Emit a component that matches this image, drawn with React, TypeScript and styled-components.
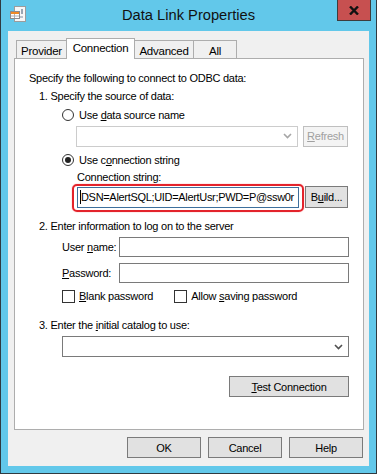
import React from "react"
import styled, { createGlobalStyle } from "styled-components"

const GlobalStyle = createGlobalStyle`
  html, body {
    margin: 0;
    padding: 0;
    background: #ffffff;
  }
  body {
    font-family: "Liberation Sans", Arial, sans-serif;
    font-size: 11px;
    letter-spacing: -0.25px;
    color: #000;
  }
  * {
    box-sizing: border-box;
  }
`

const Window = styled.div`
  width: 377px;
  height: 474px;
  background: #62c8ea;
  border: 1px solid #2f3a40;
  border-top: none;
  display: flex;
  flex-direction: column;
`

const TitleBar = styled.div`
  height: 31px;
  flex-shrink: 0;
  display: grid;
  grid-template-columns: 1fr auto 1fr;
  align-items: start;
`

const AppIcon = styled.div`
  margin: 5px 0 0 9px;
  width: 17px;
  height: 17px;

  svg {
    display: block;
  }
`

const Title = styled.div`
  margin-top: 6px;
  font-size: 14.7px;
  letter-spacing: 0;
  line-height: 18px;
  color: #111;
`

const CloseButton = styled.div`
  justify-self: end;
  margin-right: 5px;
  width: 34px;
  height: 21px;
  background: #c75050;
  border: 1px solid #3d3d3d;
  border-top: none;
  display: flex;
  align-items: center;
  justify-content: center;
`

const Client = styled.div`
  flex: 1;
  margin: 0 7px 7px 7px;
  background: #f0f0f0;
  padding: 7px 6px 0 6px;
  display: flex;
  flex-direction: column;
`

const TabStrip = styled.div`
  display: flex;
  align-items: flex-end;
  padding-left: 2px;
  margin-bottom: -1px;
  position: relative;
  z-index: 1;
`

const Tab = styled.div<{ $active?: boolean; $w: number }>`
  width: ${(p) => p.$w}px;
  height: ${(p) => (p.$active ? 21 : 19)}px;
  margin-left: -1px;
  border: 1px solid #adadad;
  border-bottom: ${(p) => (p.$active ? "none" : "1px solid #adadad")};
  background: ${(p) => (p.$active ? "#ffffff" : "#f0f0f0")};
  position: relative;
  z-index: ${(p) => (p.$active ? 2 : 1)};
  display: flex;
  justify-content: center;
  padding-top: ${(p) => (p.$active ? 2 : 3)}px;
  line-height: 14px;
  font-size: 11.5px;

  &:first-child {
    margin-left: 0;
  }
`

const Panel = styled.div`
  height: 372px;
  width: 350px;
  background: #ffffff;
  border: 1px solid #adadad;
  padding: 12px 14px 0 14px;
  display: flex;
  flex-direction: column;
`

const Row = styled.div<{ $mt: number; $indent?: number; $h?: number; $end?: boolean }>`
  margin-top: ${(p) => p.$mt}px;
  padding-left: ${(p) => p.$indent ?? 0}px;
  height: ${(p) => p.$h ?? 14}px;
  line-height: 14px;
  display: flex;
  align-items: center;
  justify-content: ${(p) => (p.$end ? "flex-end" : "flex-start")};
  white-space: nowrap;
`

const Key = styled.span`
  text-decoration: underline;
  text-underline-offset: 1px;
`

const Radio = styled.span<{ $checked?: boolean }>`
  width: 12px;
  height: 12px;
  border-radius: 50%;
  border: 1px solid #333;
  background: #fff;
  margin-right: 5px;
  display: flex;
  align-items: center;
  justify-content: center;

  &::after {
    content: "";
    display: ${(p) => (p.$checked ? "block" : "none")};
    width: 6px;
    height: 6px;
    border-radius: 50%;
    background: #222;
  }
`

const Check = styled.span`
  width: 13px;
  height: 13px;
  border: 1px solid #333;
  background: #fff;
  margin-right: 4px;
`

const Combo = styled.div<{ $w?: number; $disabled?: boolean }>`
  ${(p) => (p.$w ? `width: ${p.$w}px;` : "flex: 1;")}
  height: 21px;
  background: #fff;
  border: 1px solid ${(p) => (p.$disabled ? "#cccccc" : "#7a7a7a")};
  display: flex;
  align-items: center;
  justify-content: flex-end;
  padding-right: 5px;
`

const Input = styled.div<{ $w: number; $focused?: boolean }>`
  width: ${(p) => p.$w}px;
  height: ${(p) => (p.$focused ? 21 : 20)}px;
  margin-left: auto;
  background: #fff;
  border: 1px solid ${(p) => (p.$focused ? "#3d6f9c" : "#7a7a7a")};
  display: flex;
  align-items: center;
  padding-left: 2px;
  overflow: hidden;
  white-space: nowrap;
  letter-spacing: -0.32px;
`

const FocusWrap = styled.div`
  position: relative;
  display: flex;
`

const Callout = styled.span`
  position: absolute;
  left: -5px;
  right: -5px;
  top: -3px;
  bottom: -4px;
  border: 2px solid #e3232b;
  border-radius: 5px;
  box-shadow: 0 0 1px #ff4b4b;
  pointer-events: none;
`

const Caret = styled.span`
  border-left: 1px solid #000;
  height: 14px;
  line-height: 14px;
`

const Button = styled.div<{ $w: number; $disabled?: boolean; $h?: number }>`
  width: ${(p) => p.$w}px;
  height: ${(p) => p.$h ?? 21}px;
  background: ${(p) => (p.$disabled ? "#f4f4f4" : "#e1e1e1")};
  border: 1px solid ${(p) => (p.$disabled ? "#bfbfbf" : "#7a7a7a")};
  color: ${(p) => (p.$disabled ? "#a0a0a0" : "#000")};
  display: flex;
  align-items: center;
  justify-content: center;
  line-height: 14px;
  flex-shrink: 0;
`

const Gap = styled.span<{ $w: number }>`
  width: ${(p) => p.$w}px;
  flex-shrink: 0;
`

const Footer = styled.div`
  margin-top: 7px;
  display: flex;
  justify-content: flex-end;
  gap: 7px;
`

const Chevron = ({ color }: { color: string }) => (
  <svg width="9" height="6" viewBox="0 0 9 6">
    <path d="M1 1 L4.5 4.5 L8 1" fill="none" stroke={color} strokeWidth="1.6" />
  </svg>
)

const DataLinkIcon = () => (
  <svg width="17" height="17" viewBox="0 0 17 17">
    <rect x="4.5" y="1.5" width="11" height="15" fill="#f7f7f7" stroke="#9c9c9c" />
    <rect x="11" y="4" width="2" height="5" fill="#9aa6b4" />
    <rect x="8" y="11" width="5" height="2" fill="#b9c2cc" />
    <rect x="0.5" y="6.5" width="9" height="7" fill="#ffffff" stroke="#8c8c8c" />
    <rect x="1" y="7" width="8" height="2" fill="#f08a24" />
    <line x1="1" y1="11" x2="9" y2="11" stroke="#b0b0b0" />
    <line x1="4.5" y1="9" x2="4.5" y2="13" stroke="#b0b0b0" />
  </svg>
)

const CloseGlyph = () => (
  <svg width="10" height="9" viewBox="0 0 10 9">
    <path d="M1 0.5 L9 8.5 M9 0.5 L1 8.5" stroke="#111" strokeWidth="2.4" />
  </svg>
)

export default function App() {
  return (
    <>
      <GlobalStyle />
      <Window>
        <TitleBar>
          <AppIcon>
            <DataLinkIcon />
          </AppIcon>
          <Title>Data Link Properties</Title>
          <CloseButton>
            <CloseGlyph />
          </CloseButton>
        </TitleBar>

        <Client>
          <TabStrip>
            <Tab $w={51}>Provider</Tab>
            <Tab $w={69} $active>
              Connection
            </Tab>
            <Tab $w={60}>Advanced</Tab>
            <Tab $w={44}>All</Tab>
          </TabStrip>

          <Panel>
            <Row $mt={0}>Specify the following to connect to ODBC data:</Row>
            <Row $mt={4} $indent={10}>
              1. Specify the source of data:
            </Row>
            <Row $mt={4} $indent={33} $h={15}>
              <Radio />
              <span>
                Use <Key>d</Key>ata source name
              </span>
            </Row>
            <Row $mt={3} $indent={47} $h={22}>
              <Combo $w={222} $disabled>
                <Chevron color="#a6a6a6" />
              </Combo>
              <Gap $w={5} />
              <Button $w={45} $disabled>
                <span>
                  <Key>R</Key>efresh
                </span>
              </Button>
            </Row>
            <Row $mt={6} $indent={33}>
              <Radio $checked />
              <span>
                Use c<Key>o</Key>nnection string
              </span>
            </Row>
            <Row $mt={3} $indent={48}>
              Connection string:
            </Row>
            <Row $mt={2} $indent={48} $h={22}>
              <FocusWrap>
                <Input $w={222} $focused>
                  <Caret>DSN=AlertSQL;UID=AlertUsr;PWD=P@ssw0r</Caret>
                </Input>
                <Callout />
              </FocusWrap>
              <Gap $w={6} />
              <Button $w={43} $h={22}>
                <span>
                  B<Key>u</Key>ild...
                </span>
              </Button>
            </Row>
            <Row $mt={11} $indent={10}>
              2. Enter information to log on to the server
            </Row>
            <Row $mt={4} $indent={33} $h={20}>
              <span>
                User <Key>n</Key>ame:
              </span>
              <Input $w={230} />
            </Row>
            <Row $mt={6} $indent={33} $h={20}>
              <span>
                <Key>P</Key>assword:
              </span>
              <Input $w={230} />
            </Row>
            <Row $mt={6} $indent={33}>
              <Check />
              <span>
                <Key>B</Key>lank password
              </span>
              <Gap $w={21} />
              <Check />
              <span>
                Allow <Key>s</Key>aving password
              </span>
            </Row>
            <Row $mt={15} $indent={10}>
              <span>
                3. Enter the <Key>i</Key>nitial catalog to use:
              </span>
            </Row>
            <Row $mt={4} $indent={33} $h={21}>
              <Combo>
                <Chevron color="#505050" />
              </Combo>
            </Row>
            <Row $mt={19} $h={21} $end>
              <Button $w={120}>
                <span>
                  <Key>T</Key>est Connection
                </span>
              </Button>
            </Row>
          </Panel>

          <Footer>
            <Button $w={74}>OK</Button>
            <Button $w={74}>Cancel</Button>
            <Button $w={74}>Help</Button>
          </Footer>
        </Client>
      </Window>
    </>
  )
}
